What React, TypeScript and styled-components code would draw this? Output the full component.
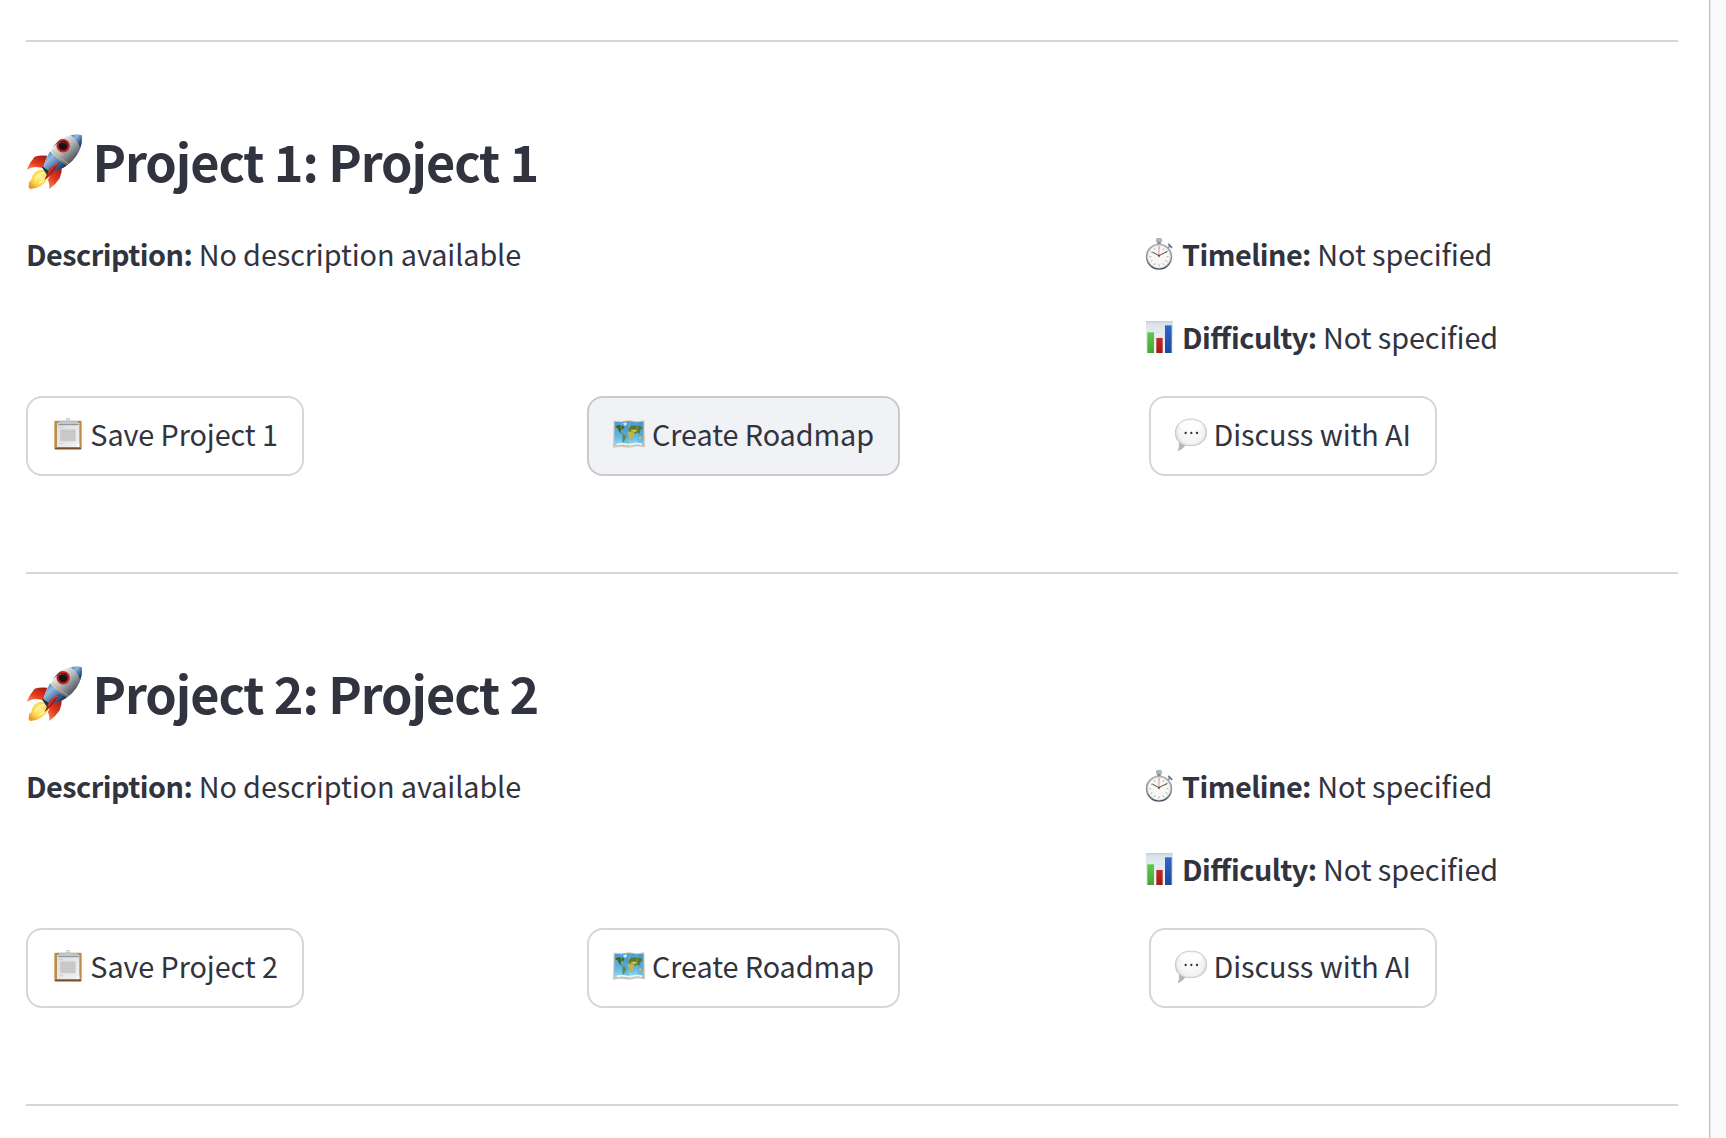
import React from 'react';
import styled, { createGlobalStyle } from 'styled-components';

const GlobalStyle = createGlobalStyle`
  * { box-sizing: border-box; }
  html, body { margin: 0; background: #fff; overflow: hidden; }
`;

const Page = styled.div`
  display: flex;
  width: 1726px;
  height: 1138px;
  overflow: hidden;
  background: #fff;
  color: #31333f;
  font-family: 'Source Sans Pro', 'Noto Sans CJK SC', 'Noto Sans', sans-serif;
  font-size: 28.8px;
  line-height: 54px;
  font-feature-settings: 'liga' 1;
`;

const Main = styled.main`
  width: 1709px;
  flex: none;
  padding: 40px 31px 0 26px;
`;

const Gutter = styled.aside`
  flex: 1;
  background: #fafafa;
  border-left: 1px solid #c1c1c1;
  box-shadow: inset 1px 0 0 #e8e8e8;
`;

const Rule = styled.hr`
  height: 2px;
  margin: 0;
  border: 0;
  background: #d6d6d8;
`;

const Project = styled.section`
  padding: 84px 0 96px;
`;

const Heading = styled.h2`
  display: flex;
  align-items: flex-start;
  height: 68px;
  margin: 0 0 33px;
  font-size: 50.4px;
  line-height: 70px;
  font-weight: 700;
  letter-spacing: -1.06px;
  white-space: nowrap;
`;

const Details = styled.div`
  display: grid;
  grid-template-columns: 1119px 1fr;
  margin-bottom: 34px;
`;

const Facts = styled.div`
  display: flex;
  flex-direction: column;
  gap: 31px;
`;

const Line = styled.p`
  display: flex;
  height: 52px;
  margin: 0;
  white-space: nowrap;
`;

const Words = styled.span`
  letter-spacing: -0.08px;
  white-space: pre;
`;

const Label = styled.strong`
  font-weight: 700;
  letter-spacing: -0.52px;
`;

const Actions = styled.div`
  display: grid;
  grid-template-columns: 561px 562px 1fr;
`;

const Button = styled.button<{ $width: number; $active?: boolean }>`
  display: flex;
  align-items: flex-start;
  width: ${(p) => p.$width}px;
  height: 80px;
  padding: 9px 0 0 26px;
  border: 2px solid ${(p) => (p.$active ? '#c9cad0' : '#d6d6d8')};
  border-radius: 16px;
  background: ${(p) => (p.$active ? '#f0f2f6' : '#fff')};
  color: inherit;
  font: inherit;
  font-feature-settings: inherit;
  white-space: nowrap;
`;

const Glyph = styled.svg<{ $top: number; $left?: number; $gap: number }>`
  flex: none;
  display: block;
  margin: ${(p) => p.$top}px ${(p) => p.$gap}px 0 ${(p) => p.$left ?? 0}px;
`;

const Defs = styled.svg`
  position: absolute;
  width: 0;
  height: 0;
`;

const Gradients = () => (
  <Defs aria-hidden>
    <defs>
      <linearGradient id="hull" x1="0" y1="0" x2="0.75" y2="0.8">
        <stop offset="0.15" stopColor="#3f6fa8" />
        <stop offset="0.38" stopColor="#e9edee" />
        <stop offset="0.62" stopColor="#aeb4b8" />
        <stop offset="1" stopColor="#3c4249" />
      </linearGradient>
      <linearGradient id="blue" x1="0" y1="0" x2="0.8" y2="0.8">
        <stop offset="0" stopColor="#3c6ea9" />
        <stop offset="0.4" stopColor="#91b9e2" />
        <stop offset="1" stopColor="#173d70" />
      </linearGradient>
      <linearGradient id="fin" x1="0.8" y1="0" x2="0.2" y2="1">
        <stop offset="0" stopColor="#a81b11" />
        <stop offset="0.6" stopColor="#e83d20" />
        <stop offset="1" stopColor="#f3874a" />
      </linearGradient>
      <radialGradient id="flame" cx="0.55" cy="0.4" r="0.65">
        <stop offset="0" stopColor="#fff28c" />
        <stop offset="0.6" stopColor="#fbd648" />
        <stop offset="1" stopColor="#ef9330" />
      </radialGradient>
      <linearGradient id="steel" x1="0" y1="0" x2="0" y2="1">
        <stop offset="0" stopColor="#aeb2b6" />
        <stop offset="0.65" stopColor="#80868c" />
        <stop offset="1" stopColor="#475160" />
      </linearGradient>
      <linearGradient id="panel" x1="0" y1="0" x2="0" y2="1">
        <stop offset="0" stopColor="#ccd8e1" />
        <stop offset="0.15" stopColor="#dfe6ee" />
        <stop offset="1" stopColor="#f0f3f8" />
      </linearGradient>
      <linearGradient id="green" x1="0" y1="0" x2="0" y2="1">
        <stop offset="0" stopColor="#5ccb45" />
        <stop offset="1" stopColor="#48a336" />
      </linearGradient>
      <linearGradient id="red" x1="0" y1="0" x2="0" y2="1">
        <stop offset="0" stopColor="#c42a20" />
        <stop offset="1" stopColor="#9f1a13" />
      </linearGradient>
      <linearGradient id="royal" x1="0" y1="0" x2="0" y2="1">
        <stop offset="0" stopColor="#2c66cf" />
        <stop offset="1" stopColor="#1e489c" />
      </linearGradient>
      <linearGradient id="paper" x1="0" y1="0" x2="1" y2="1">
        <stop offset="0" stopColor="#dcdcdc" />
        <stop offset="1" stopColor="#f2f2f2" />
      </linearGradient>
      <linearGradient id="sea" x1="0" y1="0" x2="0" y2="1">
        <stop offset="0" stopColor="#4c9bd0" />
        <stop offset="0.6" stopColor="#5cb8ec" />
        <stop offset="1" stopColor="#a0dbf5" />
      </linearGradient>
      <radialGradient id="bubble" cx="0.5" cy="0.38" r="0.62">
        <stop offset="0" stopColor="#ffffff" />
        <stop offset="0.65" stopColor="#f3f3f3" />
        <stop offset="1" stopColor="#bdbdbd" />
      </radialGradient>
    </defs>
  </Defs>
);

const Rocket = () => (
  <Glyph $top={6} $gap={8.5} width="58" height="60" viewBox="18 6 174 180">
    <path d="M82 77 Q58 75 44 80 Q30 96 20 119 Q38 109 53 112 L69 113Z" fill="url(#fin)" />
    <path d="M125 111 Q127 127 119 145 Q107 164 88 177 Q90 163 84 150 L94 126Z" fill="url(#fin)" />
    <path d="M68 119 Q48 119 39 134 Q34 144 34 150 Q24 157 27 164 Q23 172 31 177 Q46 177 60 169 Q78 160 89 135Z" fill="url(#flame)" />
    <path d="M74 127 Q52 131 46 150 M80 135 Q71 154 57 160" fill="none" stroke="#fff7b2" strokeWidth="4" />
    <path d="M65 111 L81 107 L97 124 L84 139Z" fill="#26313f" />
    <path d="M71 111 Q83 72 107 41 Q136 11 177 14 Q186 14 186 23 Q187 61 156 94 Q129 120 91 126Z" fill="url(#hull)" />
    <path d="M90 64 Q108 87 140 107 Q119 121 91 126 L71 111 Q76 87 90 64Z" fill="url(#blue)" />
    <path d="M107 41 Q116 31 128 25 L99 52Z" fill="#2e609c" />
    <path d="M153 16 Q178 11 185 16 Q188 34 180 55 Q177 35 153 16Z" fill="url(#blue)" />
    <path d="M97 60 Q116 83 144 101" fill="none" stroke="#d0b365" strokeWidth="2.5" />
    <circle cx="129.500" cy="47" r="17" fill="#1b1014" stroke="#c72420" strokeWidth="6.500" />
    <path d="M119 41 Q130 31 139 44" fill="none" stroke="#5f484c" strokeWidth="2.500" />
    <path d="M119 97 Q94 106 84 125 L73 150 Q98 136 119 97Z" fill="#a91c18" />
    <path d="M113 101 Q93 112 86 131" fill="none" stroke="#ee5740" strokeWidth="3" />
  </Glyph>
);

const ticks = Array.from({ length: 12 }, (_, i) => i * 30);

const Stopwatch = () => (
  <Glyph $top={11} $gap={9} width="28" height="33" viewBox="75 54 84 99">
    <rect x="112" y="62" width="10" height="15" fill="#6e757d" />
    <rect x="109" y="55" width="16" height="12" rx="5" fill="#b3b7ba" stroke="#858b91" strokeWidth="1.500" />
    <path d="M142 85 L151 77" stroke="#777e86" strokeWidth="4" />
    <path d="M146 73 L155 82" stroke="#6c737b" strokeWidth="5" strokeLinecap="round" />
    <circle cx="117" cy="110" r="37" fill="#f7f7f6" stroke="url(#steel)" strokeWidth="5" />
    <circle cx="117" cy="110" r="34" fill="none" stroke="#d0d4d7" strokeWidth="2" />
    {ticks.map((a) => (
      <path key={a} d="M117 81 V87" stroke="#a5a5a5" strokeWidth="2.500" transform={`rotate(${a} 117 110)`} />
    ))}
    <path d="M117 78 V112" stroke="#f2ac9d" strokeWidth="4" />
    <path d="M97 96 L117 107 L142 94" fill="none" stroke="#3d3d3d" strokeWidth="2.800" />
    <circle cx="117" cy="107" r="3" fill="#5d3c38" />
  </Glyph>
);

const Chart = () => (
  <Glyph $top={11} $left={0.67} $gap={9.33} width="27" height="32" viewBox="77 303 81 96">
    <path d="M77 303 H158 V399 H77Z" fill="url(#panel)" />
    <path d="M78 305 H157" stroke="#bdcad3" strokeWidth="2" />
    <path d="M78 320 H157 M78 337 H157 M78 354 H157 M78 371 H157" stroke="#d1dce6" strokeWidth="1" />
    <path d="M81 337 H101 V399 H81Z" fill="url(#green)" />
    <path d="M108 354 H127 V399 H108Z" fill="url(#red)" />
    <path d="M134 316 H154 V399 H134Z" fill="url(#royal)" />
  </Glyph>
);

const Clipboard = () => (
  <Glyph $top={11} $gap={8.3} width="28" height="32" viewBox="132 114 84 96">
    <rect x="133" y="122" width="82" height="87" rx="4" fill="#bd8d4b" />
    <path d="M135 203 H213 V207 H135Z" fill="#76502a" />
    <path d="M141 129 H208 V201 H141Z" fill="url(#paper)" />
    <path d="M151 148 H197 V184 H151Z" fill="#cbcbcb" />
    <path d="M146 142 H159 M151 155 H195 M151 162 H195 M151 169 H195 M151 176 H195 M147 190 H160" stroke="#bdbdbd" strokeWidth="1.500" />
    <path d="M197 201 L208 188 V201Z" fill="#fff" />
    <circle cx="174" cy="119" r="4.500" fill="none" stroke="#a7bdc7" strokeWidth="3" />
    <path d="M147 124 H164 Q169 119 174 119 Q180 119 184 124 H203 L206 134 H144Z" fill="#bdc9cc" />
    <path d="M145 134 H206" stroke="#728087" strokeWidth="2.500" />
  </Glyph>
);

const WorldMap = () => (
  <Glyph $top={13} $gap={7} $left={-2} width="32" height="28" viewBox="129 120 96 84">
    <path d="M131 122 L154 124 L177 121 L201 124 L223 121 L225 202 L201 199 L177 203 L153 200 L129 203Z" fill="#d9c5a9" />
    <path d="M134 125 L154 127 L177 124 L201 127 L220 125 L221 198 L201 195 L177 199 L153 196 L133 199Z" fill="url(#sea)" />
    <path d="M154 126 L177 123 V199 L153 196Z" fill="#347fae" opacity=".2" />
    <path d="M201 127 L220 125 L221 198 L201 195Z" fill="#347fae" opacity=".18" />
    <path d="M137 138 L147 135 L161 139 L163 145 L156 148 L152 155 L158 163 L151 160 L145 151 L143 144 L137 143Z" fill="#3f6527" />
    <path d="M157 163 L166 165 L169 172 L164 180 L160 188 L158 183Z" fill="#6d8a30" />
    <path d="M158 130 L169 127 L172 132 L165 138Z" fill="#d4e6e8" />
    <path d="M174 146 L183 137 L198 136 L213 139 L219 144 L211 150 L208 161 L202 158 L197 163 L191 155 L183 153 L177 158Z" fill="#567a29" />
    <path d="M175 155 L187 155 L193 164 L188 172 L186 183 L180 178 L180 168 L173 161Z" fill="#c4b53a" />
    <path d="M181 149 L201 149 L195 157 L187 154Z" fill="#e3c74a" />
    <path d="M205 171 L213 168 L216 175 L208 178Z" fill="#d3bc59" />
    <path d="M140 193 L153 191 L177 194 L201 190 L216 193" fill="none" stroke="#e9f8fc" strokeWidth="5" />
    <path d="M154 126 L153 196 M177 124 V199 M201 127 V195" stroke="#a7d5e9" strokeWidth="1" />
  </Glyph>
);

const Bubble = () => (
  <Glyph $top={11} $gap={6.5} $left={-2} width="32" height="33" viewBox="135 111 96 99">
    <path d="M183 114 C210 114 230 131 230 155 C230 179 210 194 183 194 C176 194 171 193 166 192 Q158 204 145 209 Q150 196 148 184 C140 177 136 167 136 155 C136 131 156 114 183 114Z" fill="url(#bubble)" stroke="#b3b3b3" strokeWidth="2" />
    <path d="M148 184 Q154 190 166 192 Q158 204 145 209 Q151 197 148 184Z" fill="#b6b6b6" />
    <ellipse cx="183" cy="134" rx="34" ry="15" fill="#fff" opacity=".75" />
    <circle cx="167" cy="156" r="3.500" fill="#333" />
    <circle cx="184" cy="156" r="3.500" fill="#333" />
    <circle cx="201" cy="156" r="3.500" fill="#333" />
  </Glyph>
);

function ProjectBlock({ id, highlighted }: { id: number; highlighted?: boolean }) {
  return (
    <Project>
      <Heading>
        <Rocket />
        <span>{`Project ${id}: Project ${id}`}</span>
      </Heading>
      <Details>
        <Line>
          <Words><Label>Description:</Label> No description available</Words>
        </Line>
        <Facts>
          <Line>
            <Stopwatch />
            <Words><Label>Timeline:</Label> Not specified</Words>
          </Line>
          <Line>
            <Chart />
            <Words><Label>Difficulty:</Label> Not specified</Words>
          </Line>
        </Facts>
      </Details>
      <Actions>
        <Button $width={278}><Clipboard /><Words>Save Project {id}</Words></Button>
        <Button $width={313} $active={highlighted}><WorldMap /><Words>Create Roadmap</Words></Button>
        <Button $width={288}><Bubble /><Words>Discuss with AI</Words></Button>
      </Actions>
    </Project>
  );
}

export default function App() {
  return (
    <>
      <GlobalStyle />
      <Gradients />
      <Page>
        <Main>
          <Rule />
          <ProjectBlock id={1} highlighted />
          <Rule />
          <ProjectBlock id={2} />
          <Rule />
        </Main>
        <Gutter />
      </Page>
    </>
  );
}
